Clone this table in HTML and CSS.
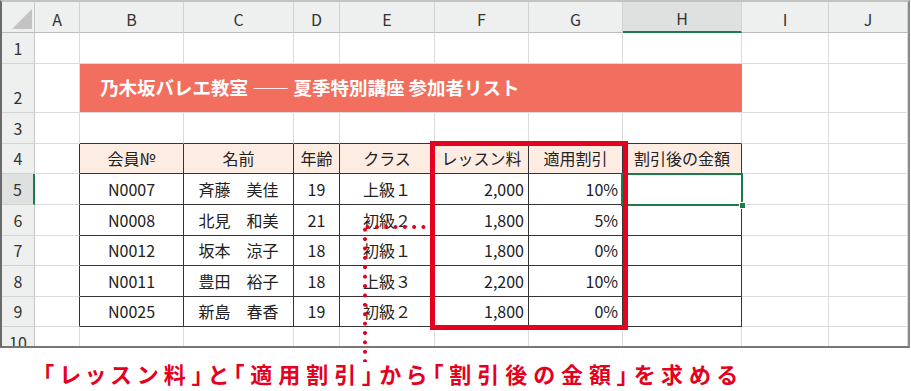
FILE: index.html
```html
<!DOCTYPE html>
<html lang="ja">
<head>
<meta charset="utf-8">
<link rel="stylesheet" href="styles.css">
</head>
<body>
<div class="page">
  <div class="sheet">
    <div class="grid">
      <div class="corner"><svg width="20" height="20" viewBox="0 0 20 20"><polygon points="20,0 20,20 0,20" fill="#c4c4c4"/></svg></div>
      <div class="ch">A</div><div class="ch">B</div><div class="ch">C</div><div class="ch">D</div><div class="ch">E</div><div class="ch">F</div><div class="ch">G</div><div class="ch sel">H</div><div class="ch">I</div><div class="ch">J</div>

      <div class="rh">1</div><div class="c"></div><div class="c"></div><div class="c"></div><div class="c"></div><div class="c"></div><div class="c"></div><div class="c"></div><div class="c"></div><div class="c"></div><div class="c"></div>

      <div class="rh">2</div><div class="c"></div><div class="title">乃木坂バレエ教室 —— 夏季特別講座 参加者リスト</div><div class="c"></div><div class="c"></div>

      <div class="rh">3</div><div class="c"></div><div class="c et"></div><div class="c et"></div><div class="c et"></div><div class="c et"></div><div class="c et"></div><div class="c et"></div><div class="c et"></div><div class="c"></div><div class="c"></div>

      <div class="rh">4</div><div class="c el"></div><div class="t th">会員№</div><div class="t th">名前</div><div class="t th">年齢</div><div class="t th">クラス</div><div class="t th">レッスン料</div><div class="t th">適用割引</div><div class="t th">割引後の金額</div><div class="c"></div><div class="c"></div>

      <div class="rh sel">5</div><div class="c el"></div><div class="t">N0007</div><div class="t">斉藤　美佳</div><div class="t">19</div><div class="t">上級１</div><div class="t r">2,000</div><div class="t r">10%</div><div class="t"></div><div class="c"></div><div class="c"></div>

      <div class="rh">6</div><div class="c el"></div><div class="t">N0008</div><div class="t">北見　和美</div><div class="t">21</div><div class="t">初級２</div><div class="t r">1,800</div><div class="t r">5%</div><div class="t"></div><div class="c"></div><div class="c"></div>

      <div class="rh">7</div><div class="c el"></div><div class="t">N0012</div><div class="t">坂本　涼子</div><div class="t">18</div><div class="t">初級１</div><div class="t r">1,800</div><div class="t r">0%</div><div class="t"></div><div class="c"></div><div class="c"></div>

      <div class="rh">8</div><div class="c el"></div><div class="t">N0011</div><div class="t">豊田　裕子</div><div class="t">18</div><div class="t">上級３</div><div class="t r">2,200</div><div class="t r">10%</div><div class="t"></div><div class="c"></div><div class="c"></div>

      <div class="rh">9</div><div class="c el"></div><div class="t">N0025</div><div class="t">新島　春香</div><div class="t">19</div><div class="t">初級２</div><div class="t r">1,800</div><div class="t r">0%</div><div class="t"></div><div class="c"></div><div class="c"></div>

      <div class="rh">10</div><div class="c"></div><div class="c"></div><div class="c"></div><div class="c"></div><div class="c"></div><div class="c"></div><div class="c"></div><div class="c"></div><div class="c"></div><div class="c"></div>
    </div>
  </div>
  <p class="caption">「レッスン料」と「適用割引」から「割引後の金額」を求める</p>

  <div class="sel-box"></div>
  <div class="handle"></div>
  <div class="hl"></div>
  <div class="dots-h"></div>
  <div class="dots-v"></div>
</div>
</body>
</html>
```

FILE: styles.css
```css
* { box-sizing: border-box; }
html, body { margin: 0; padding: 0; background: #fff; }
body { font-family: "Noto Sans CJK JP", "Noto Sans", sans-serif; color: #222; }

.page { position: relative; width: 911px; height: 391px; overflow: hidden; background: #fff; }

.sheet {
  width: 910px;
  height: 348px;
  overflow: hidden;
  border-top: 2px solid #c2c2c2;
  border-left: 2px solid #6a6a6a;
  border-right: 2px solid #8a8a8a;
  border-bottom: 2px solid #767676;
}

.grid {
  display: grid;
  grid-template-columns: 33px 45px 104px 110px 46px 95px 94px 94px 119px 87px 79px;
  grid-template-rows: 31px 31px 49px 31px 30px 31px 31px 30px 31px 30px 31px;
}

.grid > div { font-size: 16px; line-height: 20px; white-space: nowrap; overflow: hidden; }

.corner {
  background: #eeefef;
  border-right: 1px solid #c9c9c9;
  border-bottom: 1px solid #bcbcbc;
  display: flex;
  align-items: flex-end;
  justify-content: flex-end;
  padding: 0 2px 3px 0;
}
.corner svg { display: block; }

.ch {
  background: #eeefef;
  border-right: 1px solid #d2d2d2;
  border-bottom: 1px solid #bcbcbc;
  display: flex;
  align-items: center;
  justify-content: center;
  padding-top: 3px;
  color: #333;
}
.ch.sel { background: #dfe1e0; border-bottom: 2px solid #1b7b4b; padding-top: 2px; }

.rh {
  background: #eeefef;
  border-right: 1px solid #c6c6c6;
  border-bottom: 1px solid #d2d2d2;
  display: flex;
  align-items: flex-end;
  justify-content: center;
  padding-bottom: 5px;
  color: #333;
}
.rh.sel { background: #dfe0e0; border-right: 2px solid #1b7b4b; }

.c {
  border-right: 1px solid #dcdcdc;
  border-bottom: 1px solid #dcdcdc;
}
.c.et { border-bottom-color: #3a3333; }
.c.el { border-right-color: #3a3333; }

.grid > .title {
  grid-column: span 7;
  background: #f26e5f;
  color: #fff;
  font-weight: 700;
  font-size: 18.5px;
  display: flex;
  align-items: center;
  padding: 0 0 3px 20px;
  border-bottom: 1px solid #dcdcdc;
}

.t {
  border-right: 1px solid #3a3333;
  border-bottom: 1px solid #3a3333;
  display: flex;
  align-items: flex-end;
  justify-content: center;
  padding: 0 4px 5px 4px;
  color: #222;
}
.t.th { background: #fdece2; align-items: center; padding-bottom: 1px; }
.t.r { justify-content: flex-end; }

.caption {
  margin: 10px 0 0 43px;
  color: #e60020;
  font-size: 22px;
  line-height: 30px;
  font-weight: 700;
  letter-spacing: 6px;
  font-feature-settings: "palt";
  white-space: nowrap;
}

.sel-box {
  position: absolute;
  left: 621px; top: 173px;
  width: 122px; height: 33px;
  border: 2px solid #1b7b4b;
}
.handle {
  position: absolute;
  left: 739px; top: 202px;
  width: 7px; height: 7px;
  background: #1b7b4b;
  border: 1px solid #fff;
}
.hl {
  position: absolute;
  left: 430px; top: 141px;
  width: 198px; height: 189px;
  border: 5px solid #e60020;
}
.dots-h {
  position: absolute;
  left: 363px; top: 225px;
  width: 70px; height: 4px;
  background-image: radial-gradient(circle at center, #e60020 1.7px, rgba(230,0,32,0) 2.2px);
  background-size: 9.3px 4px;
  background-repeat: repeat-x;
}
.dots-v {
  position: absolute;
  left: 363px; top: 225px;
  width: 4px; height: 137px;
  background-image: radial-gradient(circle at center, #e60020 1.7px, rgba(230,0,32,0) 2.2px);
  background-size: 4px 9.4px;
  background-repeat: repeat-y;
}
```
